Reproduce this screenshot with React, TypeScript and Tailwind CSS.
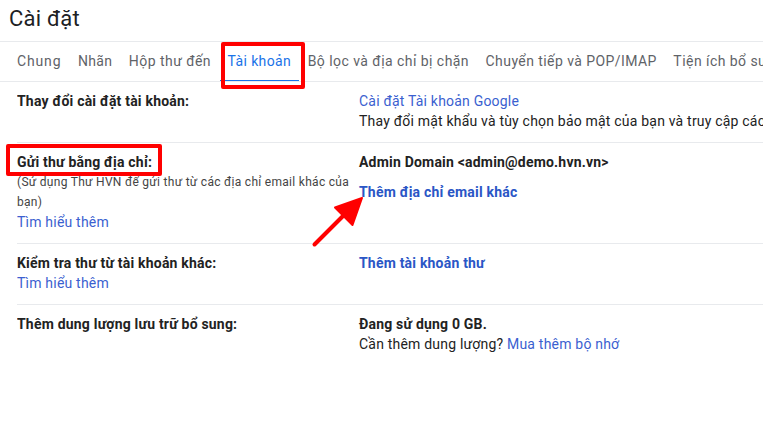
export default function App() {
  const tabs: [string, string][] = [
    ["Chung", "tracking-[0.85px]"],
    ["Nhãn", "tracking-[0.35px]"],
    ["Hộp thư đến", "tracking-[0.45px]"],
    ["Tài khoản", "tracking-[0.38px]"],
    ["Bộ lọc và địa chỉ bị chặn", "tracking-[0.45px]"],
    ["Chuyển tiếp và POP/IMAP", "tracking-[0.43px]"],
    ["Tiện ích bổ sung", "tracking-[0.45px]"],
  ];
  const link = "text-[#3b5fd0]";
  const boldLink = "font-bold text-[#2a56c6]";
  return (
    <div className="relative w-[763px] h-[426px] overflow-hidden bg-white text-[14px] leading-[20px] tracking-[0.2px] text-[#222222] font-['Roboto',sans-serif]">
      <div className="h-[41px] pl-[9px] pt-[5px] text-[22px] leading-[28px] text-[#202124]">Cài đặt</div>
      <div className="flex gap-[16.5px] pl-[17px] h-[41px] border-y border-[#e8eaed] whitespace-nowrap overflow-hidden text-[#5f6368]">
        {tabs.map(([t, m]) => (
          <div key={t} className={`${m} shrink-0 pt-[9px] ${t === "Tài khoản" ? "text-[#1a73e8] relative" : ""}`}>
            {t}
            {t === "Tài khoản" && <div className="absolute left-[-8px] right-[-8px] bottom-[-1px] h-[2px] bg-[#1a73e8]" />}
          </div>
        ))}
      </div>
      <div className="ml-[17px] w-[746px] overflow-hidden whitespace-nowrap">
        <div className="flex h-[61px] border-b border-[#e8eaed] pt-[9px]">
          <div className="w-[342px] shrink-0 font-bold">Thay đổi cài đặt tài khoản:</div>
          <div className="shrink-0">
            <div className={link}>Cài đặt Tài khoản Google</div>
            <div>Thay đổi mật khẩu và tùy chọn bảo mật của bạn và truy cập các dịch vụ khác</div>
          </div>
        </div>
        <div className="flex h-[101px] border-b border-[#e8eaed] pt-[9px]">
          <div className="w-[342px] shrink-0">
            <div className="font-bold">Gửi thư bằng địa chỉ:</div>
            <div className="text-[12px] w-[336px] whitespace-normal text-[#444444] tracking-[0.29px]">(Sử dụng Thư HVN để gửi thư từ các địa chỉ email khác của bạn)</div>
            <div className={link}>Tìm hiểu thêm</div>
          </div>
          <div className="flex-1">
            <div className="font-bold">Admin Domain &lt;admin@demo.hvn.vn&gt;</div>
            <div className={`${boldLink} mt-[10px]`}>Thêm địa chỉ email khác</div>
          </div>
        </div>
        <div className="flex h-[61px] border-b border-[#e8eaed] pt-[9px]">
          <div className="w-[342px] shrink-0">
            <div className="font-bold">Kiểm tra thư từ tài khoản khác:</div>
            <div className={link}>Tìm hiểu thêm</div>
          </div>
          <div className={boldLink}>Thêm tài khoản thư</div>
        </div>
        <div className="flex pt-[9px]">
          <div className="w-[342px] shrink-0 font-bold">Thêm dung lượng lưu trữ bổ sung:</div>
          <div>
            <div className="font-bold">Đang sử dụng 0 GB.</div>
            <div>Cần thêm dung lượng? <span className={link}>Mua thêm bộ nhớ</span></div>
          </div>
        </div>
      </div>
      <div className="absolute left-[221px] top-[42px] w-[84px] h-[47px] border-[4px] border-[#ff0000] rounded-[2px]" />
      <div className="absolute left-[6px] top-[144px] w-[156px] h-[32px] border-[4px] border-[#ff0000] rounded-[2px]" />
      <svg className="absolute left-[308px] top-[190px]" width="60" height="60" viewBox="0 0 60 60">
        <line x1="6.5" y1="54.5" x2="38" y2="23" stroke="#ff0000" strokeWidth="4" strokeLinecap="round" />
        <polygon points="54,8 27,17.5 44.5,35" fill="#ff0000" stroke="#ff0000" strokeWidth="2" strokeLinejoin="round" />
      </svg>
    </div>
  );
}
